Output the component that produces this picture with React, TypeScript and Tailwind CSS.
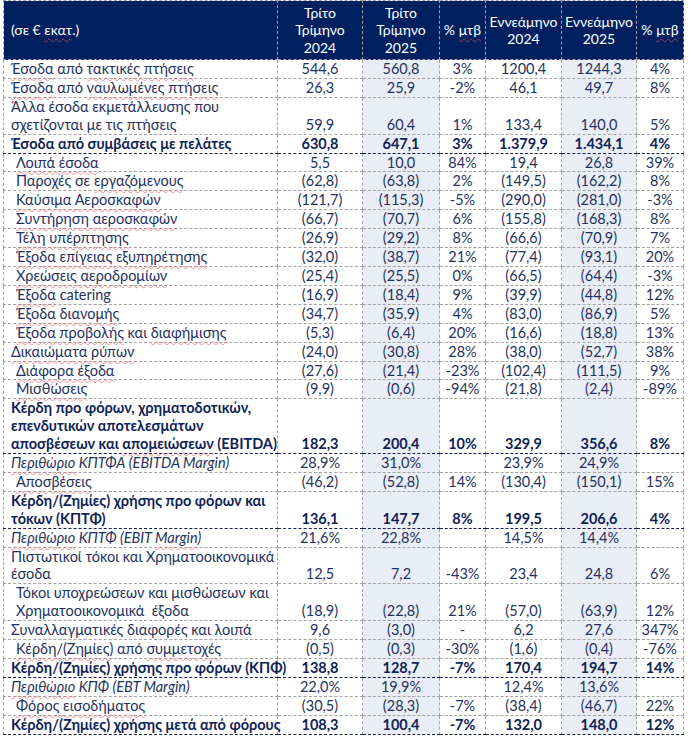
import React from 'react';

type Kind = 'normal' | 'bold' | 'margin';
type Row = { label: string; vals: string[]; kind?: Kind; indent?: boolean };

// ~word~ marks a spell-check squiggle, \n a line break inside the cell
const ROWS: Row[] = [
  { label: '~Έσοδα~ από ~τακτικές πτήσεις~', vals: ['544,6', '560,8', '3%', '1200,4', '1244,3', '4%'] },
  { label: '~Έσοδα~ από ~ναυλωμένες πτήσεις~', vals: ['26,3', '25,9', '-2%', '46,1', '49,7', '8%'] },
  { label: 'Άλλα έσοδα εκμετάλλευσης που\nσχετίζονται με τις πτήσεις', vals: ['59,9', '60,4', '1%', '133,4', '140,0', '5%'] },
  { label: 'Έσοδα από συμβάσεις με πελάτες', vals: ['630,8', '647,1', '3%', '1.379,9', '1.434,1', '4%'], kind: 'bold' },
  { label: '~Λοιπά έσοδα~', vals: ['5,5', '10,0', '84%', '19,4', '26,8', '39%'], indent: true },
  { label: 'Παροχές σε ~εργαζόμενους~', vals: ['(62,8)', '(63,8)', '2%', '(149,5)', '(162,2)', '8%'], indent: true },
  { label: '~Καύσιμα Αεροσκαφών~', vals: ['(121,7)', '(115,3)', '-5%', '(290,0)', '(281,0)', '-3%'], indent: true },
  { label: '~Συντήρηση αεροσκαφών~', vals: ['(66,7)', '(70,7)', '6%', '(155,8)', '(168,3)', '8%'], indent: true },
  { label: '~Τέλη υπέρπτησης~', vals: ['(26,9)', '(29,2)', '8%', '(66,6)', '(70,9)', '7%'], indent: true },
  { label: '~Έξοδα επίγειας εξυπηρέτησης~', vals: ['(32,0)', '(38,7)', '21%', '(77,4)', '(93,1)', '20%'], indent: true },
  { label: '~Χρεώσεις αεροδρομίων~', vals: ['(25,4)', '(25,5)', '0%', '(66,5)', '(64,4)', '-3%'], indent: true },
  { label: '~Έξοδα~ catering', vals: ['(16,9)', '(18,4)', '9%', '(39,9)', '(44,8)', '12%'], indent: true },
  { label: '~Έξοδα διανομής~', vals: ['(34,7)', '(35,9)', '4%', '(83,0)', '(86,9)', '5%'], indent: true },
  { label: '~Έξοδα προβολής~ και ~διαφήμισης~', vals: ['(5,3)', '(6,4)', '20%', '(16,6)', '(18,8)', '13%'], indent: true },
  { label: '~Δικαιώματα ρύπων~', vals: ['(24,0)', '(30,8)', '28%', '(38,0)', '(52,7)', '38%'] },
  { label: '~Διάφορα έξοδα~', vals: ['(27,6)', '(21,4)', '-23%', '(102,4)', '(111,5)', '9%'], indent: true },
  { label: '~Μισθώσεις~', vals: ['(9,9)', '(0,6)', '-94%', '(21,8)', '(2,4)', '-89%'], indent: true },
  {
    label: 'Κέρδη προ φόρων, χρηματοδοτικών,\nεπενδυτικών αποτελεσμάτων\nαποσβέσεων και ~απομειώσεων~ (EBITDA)',
    vals: ['182,3', '200,4', '10%', '329,9', '356,6', '8%'],
    kind: 'bold',
  },
  { label: '~Περιθώριο~ ΚΠΤΦΑ (EBITDA Margin)', vals: ['28,9%', '31,0%', '', '23,9%', '24,9%', ''], kind: 'margin' },
  { label: '~Αποσβέσεις~', vals: ['(46,2)', '(52,8)', '14%', '(130,4)', '(150,1)', '15%'], indent: true },
  { label: 'Κέρδη/(Ζημίες) χρήσης προ φόρων και\nτόκων (ΚΠΤΦ)', vals: ['136,1', '147,7', '8%', '199,5', '206,6', '4%'], kind: 'bold' },
  { label: '~Περιθώριο~ ΚΠΤΦ (EBIT ~Margin~)', vals: ['21,6%', '22,8%', '', '14,5%', '14,4%', ''], kind: 'margin' },
  { label: 'Πιστωτικοί τόκοι και Χρηματοοικονομικά\nέσοδα', vals: ['12,5', '7,2', '-43%', '23,4', '24,8', '6%'] },
  {
    label: 'Τόκοι υποχρεώσεων και μισθώσεων και\nΧρηματοοικονομικά  έξοδα',
    vals: ['(18,9)', '(22,8)', '21%', '(57,0)', '(63,9)', '12%'],
    indent: true,
  },
  { label: 'Συναλλαγματικές διαφορές και λοιπά', vals: ['9,6', '(3,0)', '-', '6,2', '27,6', '347%'] },
  { label: '~Κέρδη/(Ζημίες)~ από ~συμμετοχές~', vals: ['(0,5)', '(0,3)', '-30%', '(1,6)', '(0,4)', '-76%'], indent: true },
  { label: 'Κέρδη/(Ζημίες) χρήσης προ φόρων (ΚΠΦ)', vals: ['138,8', '128,7', '-7%', '170,4', '194,7', '14%'], kind: 'bold' },
  { label: '~Περιθώριο~ ΚΠΦ (EBT Margin)', vals: ['22,0%', '19,9%', '', '12,4%', '13,6%', ''], kind: 'margin' },
  { label: '~Φόρος εισοδήματος~', vals: ['(30,5)', '(28,3)', '-7%', '(38,4)', '(46,7)', '22%'], indent: true },
  { label: 'Κέρδη/(Ζημίες) χρήσης μετά από φόρους', vals: ['108,3', '100,4', '-7%', '132,0', '148,0', '12%'], kind: 'bold' },
];

const HEAD = [
  ['Τρίτο', 'Τρίμηνο', '2024'],
  ['Τρίτο', 'Τρίμηνο', '2025'],
  ['% ~μτβ~'],
  ['Εννεάμηνο', '2024'],
  ['Εννεάμηνο', '2025'],
  ['% ~μτβ~'],
];

const Squiggly = ({ text }: { text: string }) => (
  <>
    {text.split('~').map((part, j) =>
      j % 2 ? (
        <span key={j} className="underline decoration-wavy decoration-[#e2575799] decoration-1 underline-offset-[3px]">
          {part}
        </span>
      ) : (
        <React.Fragment key={j}>{part}</React.Fragment>
      )
    )}
  </>
);

const Label = ({ text }: { text: string }) => (
  <>
    {text.split('\n').map((line, i) => (
      <React.Fragment key={i}>
        {i > 0 && <br />}
        <Squiggly text={line} />
      </React.Fragment>
    ))}
  </>
);

const cell = 'border border-dashed border-[#a3a3a3] p-0';

export default function App() {
  return (
    <div className="bg-white pl-[3px] font-['Lato','Noto_Sans',sans-serif] text-[14.5px]">
      <table className="w-[680px] table-fixed border-collapse">
        <colgroup>
          <col className="w-[274px]" />
          <col className="w-[85px]" />
          <col className="w-[77px]" />
          <col className="w-[46px]" />
          <col className="w-[76px]" />
          <col className="w-[75px]" />
          <col className="w-[47px]" />
        </colgroup>
        <thead>
          <tr className="h-[59px] bg-[#002060] text-white text-[14px] leading-[17.5px]">
            <th className={`${cell} pl-[7px] text-left align-middle font-normal`}>
              <Squiggly text="(σε € ~εκατ~.)" />
            </th>
            {HEAD.map((lines, i) => (
              <th key={i} className={`${cell} text-center align-middle font-normal`}>
                {lines.map((l, k) => (
                  <div key={k}>
                    <Squiggly text={l} />
                  </div>
                ))}
              </th>
            ))}
          </tr>
        </thead>
        <tbody className="leading-[17.9px]">
          {ROWS.map((row, r) => {
            const bold = row.kind === 'bold';
            const edge = bold ? 'border-y border-y-solid border-y-[#14204a]' : '';
            const tone = bold ? 'font-bold text-[#0f2356]' : 'text-[#1f3260]';
            return (
              <tr key={r} className={tone}>
                <td
                  className={`${cell} ${edge} whitespace-pre align-top ${row.indent ? 'pl-[12px]' : 'pl-[7px]'} ${
                    row.kind === 'margin' ? 'italic' : ''
                  }`}
                >
                  <Label text={row.label} />
                </td>
                {row.vals.map((v, i) => (
                  <td
                    key={i}
                    className={`${cell} ${edge} text-center align-bottom whitespace-nowrap ${
                      i === 1 || i === 4 ? 'bg-[#e9edf6]' : ''
                    }`}
                  >
                    {v}
                  </td>
                ))}
              </tr>
            );
          })}
        </tbody>
      </table>
      <p className="pl-[2px] pt-[1px] text-[14px] leading-[18px] text-[#1f3260]">
        Σημείωση: Τα στοιχεία του 2024 έχουν αναπροσαρμοστεί για λόγους συγκρισιμότητας με το 2025 (ΔΠΧΑ 16).
      </p>
    </div>
  );
}
